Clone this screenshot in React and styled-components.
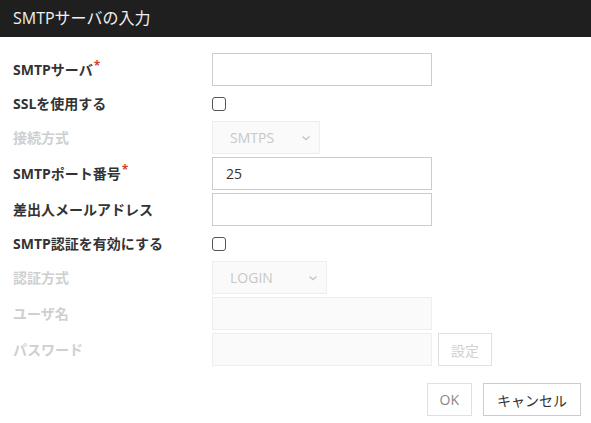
import React from 'react';
import styled, { createGlobalStyle } from 'styled-components';

const GlobalStyle = createGlobalStyle`
  body {
    margin: 0;
    background: #fff;
    font-family: "Open Sans", "Noto Sans CJK JP", sans-serif;
  }
`;

// Dialog wrapper
const Dialog = styled.div`
  width: 591px;
  height: 423px;
  background: #fff;
  box-sizing: border-box;
`;

const Header = styled.div`
  height: 37px;
  background: #1f1f1f;
  color: #f0f0f0;
  font-size: 16px;
  line-height: 37px;
  padding-left: 13px;
`;

const Body = styled.div`
  padding: 16px 13px 0 13px;
  display: grid;
  grid-template-columns: 199px 1fr;
  row-gap: 3px;
  align-items: center;
`;

const Label = styled.div`
  font-size: 14px;
  font-weight: 700;
  color: ${(p) => (p.disabled ? '#cfcfcf' : '#333')};
  height: ${(p) => (p.short ? '29px' : '33px')};
  line-height: ${(p) => (p.short ? '29px' : '33px')};
  white-space: nowrap;
`;

const Required = styled.span`
  color: #d0452a;
  font-size: 12px;
  vertical-align: top;
  line-height: 26px;
  margin-left: 1px;
`;

const Field = styled.div`
  display: flex;
  align-items: center;
  gap: 6px;
  height: ${(p) => (p.short ? '29px' : '33px')};
`;

const TextInput = styled.input`
  width: 220px;
  height: 33px;
  box-sizing: border-box;
  border: 1px solid ${(p) => (p.disabled ? '#eee' : '#ccc')};
  background: ${(p) => (p.disabled ? '#fafafa' : '#fff')};
  padding: 0 13px;
  font-family: inherit;
  font-size: 14px;
  color: #333;
  outline: none;
  margin: 0;
`;

const Check = styled.span`
  width: 12px;
  height: 12px;
  border: 1px solid #555;
  border-radius: 3px;
  background: #fff;
`;

const Select = styled.div`
  width: ${(p) => p.w}px;
  height: 33px;
  box-sizing: border-box;
  border: 1px solid #eee;
  background: #fafafa;
  display: flex;
  align-items: center;
  justify-content: space-between;
  padding: 0 8px 0 17px;
  font-size: 14px;
  color: #c8c8c8;
`;

const Button = styled.button`
  height: 33px;
  box-sizing: border-box;
  padding: 0 ${(p) => p.px || 12}px;
  background: #fff;
  border: 1px solid ${(p) => (p.disabled ? '#e0e0e0' : '#ccc')};
  color: ${(p) => (p.faint ? '#cfcfcf' : p.disabled ? '#888' : '#333')};
  font-family: inherit;
  font-size: 14px;
  margin: 0;
`;

const Footer = styled.div`
  display: flex;
  justify-content: flex-end;
  gap: 11px;
  padding: 17px 10px 0 0;
`;

const Chevron = () => (
  <svg width="10" height="10" viewBox="0 0 10 10">
    <path d="M1.5 3.5 L5 6.5 L8.5 3.5" fill="none" stroke="#c8c8c8" strokeWidth="1.6" />
  </svg>
);

const App = () => (
  <>
    <GlobalStyle />
    <Dialog>
      <Header>SMTPサーバの入力</Header>
      <Body>
        <Label>SMTPサーバ<Required>*</Required></Label>
        <Field><TextInput /></Field>

        <Label short>SSLを使用する</Label>
        <Field short><Check /></Field>

        <Label disabled>接続方式</Label>
        <Field><Select w={108}>SMTPS<Chevron /></Select></Field>

        <Label>SMTPポート番号<Required>*</Required></Label>
        <Field><TextInput defaultValue="25" /></Field>

        <Label>差出人メールアドレス</Label>
        <Field><TextInput /></Field>

        <Label short>SMTP認証を有効にする</Label>
        <Field short><Check /></Field>

        <Label disabled>認証方式</Label>
        <Field><Select w={115}>LOGIN<Chevron /></Select></Field>

        <Label disabled>ユーザ名</Label>
        <Field><TextInput disabled /></Field>

        <Label disabled>パスワード</Label>
        <Field>
          <TextInput disabled />
          <Button disabled faint px={12}>設定</Button>
        </Field>
      </Body>
      <Footer>
        <Button disabled px={12}>OK</Button>
        <Button px={13}>キャンセル</Button>
      </Footer>
    </Dialog>
  </>
);

export default App;
